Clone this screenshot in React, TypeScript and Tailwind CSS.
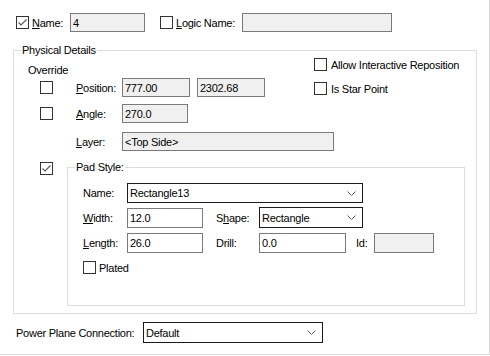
import React from 'react';

function CheckBox({ checked = false }: { checked?: boolean }) {
  return (
    <div className="w-[13px] h-[13px] shrink-0 border border-[#333333] bg-white flex items-center justify-center">
      {checked && (
        <svg width="11" height="11" viewBox="0 0 11 11">
          <polyline points="1.5,5.5 4,8 9.5,2.5" fill="none" stroke="#555555" strokeWidth="1.1" />
        </svg>
      )}
    </div>
  );
}

function Field({ value = '', width, disabled = false, h = 'h-[19px]' }: { value?: string; width: string; disabled?: boolean; h?: string }) {
  return (
    <div
      className={`${width} ${h} shrink-0 border border-[#7a7a7a] pl-[2px] flex items-center ${
        disabled ? 'bg-[#f0f0f0]' : 'bg-white'
      }`}
    >
      {value}
    </div>
  );
}

function Combo({ value, width, h = 'h-[20px]' }: { value: string; width: string; h?: string }) {
  return (
    <div className={`${width} ${h} shrink-0 border border-[#1a1a1a] bg-white pl-[2px] pr-[6px] flex items-center justify-between`}>
      <span>{value}</span>
      <svg width="9" height="5" viewBox="0 0 9 5">
        <polyline points="0.5,0.5 4.5,4.5 8.5,0.5" fill="none" stroke="#606060" strokeWidth="1" />
      </svg>
    </div>
  );
}

export default function App() {
  return (
    <div className="w-[490px] h-[356px] bg-white text-black text-[11px] leading-[14px] tracking-[-0.25px] font-['Liberation_Sans',Arial,sans-serif]">
      <div className="w-[490px] h-[355px] border-r border-b border-[#dadada]">
        {/* Name row */}
        <div className="flex items-center pl-[16px] pt-[13px] h-[32px]">
          <CheckBox checked />
          <span className="ml-[3px] w-[38px] shrink-0">
            <u>N</u>ame:
          </span>
          <Field value="4" width="w-[75px]" disabled />
          <div className="ml-[15px]">
            <CheckBox />
          </div>
          <span className="ml-[3px] w-[66px] shrink-0">
            <u>L</u>ogic Name:
          </span>
          <Field width="w-[150px]" disabled />
        </div>

        {/* Physical Details */}
        <div className="relative mt-[18px] ml-[13px] w-[464px] h-[264px] border border-[#dcdcdc]">
          <span className="absolute left-[7px] -top-[8px] px-[1px] bg-white">Physical Details</span>

          <div className="flex">
            <div className="w-[300px] shrink-0 flex flex-col">
              <div className="ml-[14px] mt-[12px]">Override</div>

              <div className="flex items-center h-[19px] mt-[1px]">
                <div className="ml-[26px]">
                  <CheckBox />
                </div>
                <span className="ml-[23px] w-[46px] shrink-0">
                  <u>P</u>osition:
                </span>
                <Field value="777.00" width="w-[68px]" disabled />
                <div className="ml-[7px]">
                  <Field value="2302.68" width="w-[68px]" disabled />
                </div>
              </div>

              <div className="flex items-center h-[19px] mt-[7px]">
                <div className="ml-[26px]">
                  <CheckBox />
                </div>
                <span className="ml-[23px] w-[46px] shrink-0">
                  <u>A</u>ngle:
                </span>
                <Field value="270.0" width="w-[66px]" disabled />
              </div>

              <div className="flex items-center h-[19px] mt-[9px]">
                <span className="ml-[62px] w-[46px] shrink-0">
                  <u>L</u>ayer:
                </span>
                <Field value="<Top Side>" width="w-[212px]" disabled />
              </div>
            </div>

            <div className="flex flex-col pt-[7px] gap-[11px]">
              <div className="flex items-center h-[13px]">
                <CheckBox />
                <span className="ml-[4px]">Allow Interactive Reposition</span>
              </div>
              <div className="flex items-center h-[13px]">
                <CheckBox />
                <span className="ml-[4px]">Is Star Point</span>
              </div>
            </div>
          </div>

          {/* Pad Style */}
          <div className="flex items-start mt-[16px]">
            <div className="ml-[26px] -mt-[5px]">
              <CheckBox checked />
            </div>
            <div className="relative ml-[14px] w-[398px] h-[139px] border border-[#dcdcdc]">
              <span className="absolute left-[7px] -top-[8px] px-[1px] bg-white">Pad Style:</span>

              <div className="flex items-center mt-[15px] h-[20px]">
                <span className="ml-[15px] w-[44px] shrink-0">Name:</span>
                <Combo value="Rectangle13" width="w-[236px]" />
              </div>

              <div className="flex items-center mt-[4px] h-[21px]">
                <span className="ml-[15px] w-[44px] shrink-0">
                  <u>W</u>idth:
                </span>
                <Field value="12.0" width="w-[76px]" h="h-[20px]" />
                <span className="ml-[13px] w-[43px] shrink-0">
                  S<u>h</u>ape:
                </span>
                <Combo value="Rectangle" width="w-[104px]" h="h-[21px]" />
              </div>

              <div className="flex items-center mt-[5px] h-[20px]">
                <span className="ml-[15px] w-[44px] shrink-0">
                  <u>L</u>ength:
                </span>
                <Field value="26.0" width="w-[76px]" h="h-[20px]" />
                <span className="ml-[13px] w-[43px] shrink-0">Drill:</span>
                <Field value="0.0" width="w-[87px]" h="h-[20px]" />
                <span className="ml-[10px] w-[18px] shrink-0">Id:</span>
                <Field width="w-[60px]" h="h-[20px]" disabled />
              </div>

              <div className="flex items-center mt-[8px] h-[13px]">
                <div className="ml-[15px]">
                  <CheckBox />
                </div>
                <span className="ml-[3px]">Plated</span>
              </div>
            </div>
          </div>
        </div>

        {/* Power plane */}
        <div className="flex items-center mt-[8px] h-[21px]">
          <span className="ml-[16px] w-[127px] shrink-0">Power Plane Connection:</span>
          <Combo value="Default" width="w-[180px]" h="h-[21px]" />
        </div>
      </div>
    </div>
  );
}
